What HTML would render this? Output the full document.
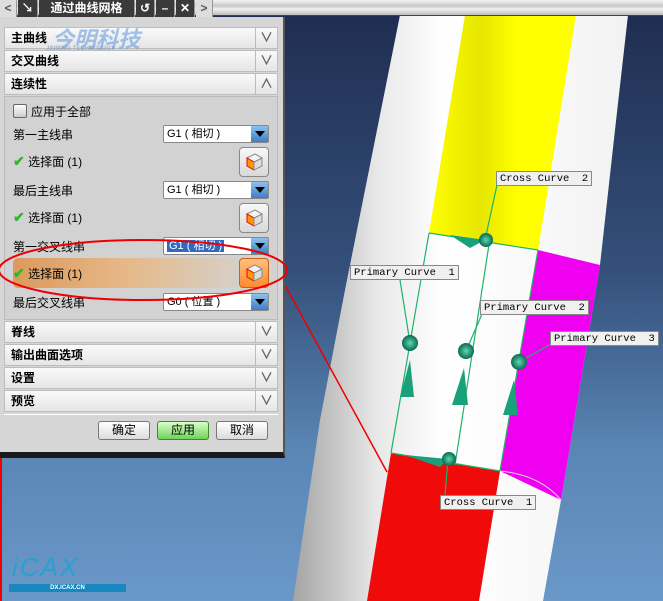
<!DOCTYPE html>
<html><head><meta charset="utf-8"><style>
*{margin:0;padding:0;box-sizing:border-box}
body{width:663px;height:601px;overflow:hidden;position:relative;font-family:"Liberation Sans","Noto Sans CJK SC","WenQuanYi Zen Hei",sans-serif;font-size:12px;color:#000;background:linear-gradient(#1f2b4f 0%,#34507a 45%,#5a86b5 75%,#6a98c8 100%)}
.abs{position:absolute}
.topbar{left:0;top:0;width:663px;height:16px;background:linear-gradient(#f4f4f4,#c8c8c8 40%,#f0f0f0 60%,#bcbcbc);border-bottom:1px solid #d00}
.tab{top:0;height:17px;background:#3a3a3a;color:#fff;font-weight:bold;text-align:center;line-height:17px;border-right:1px solid #999}
.dlg{left:0;top:17px;width:285px;height:441px;background:#d6d6d6;border-right:2px solid #555;border-bottom:6px solid #1a1a1a}
.hdr{left:4px;width:274px;height:22px;background:linear-gradient(#fafafa,#e6e6e6);border:1px solid #bdbdbd;font-weight:bold;line-height:21px;padding-left:6px;font-size:12px}
.hdr .b{position:absolute;right:0;top:0;width:22px;height:20px;border-left:1px solid #bbb;text-align:center;color:#666;font-size:13px;line-height:20px}
.lbl{left:13px}
.dd{left:163px;width:106px;height:18px;background:#fff;border:1px solid #888;border-radius:2px;font-size:11px;line-height:16px;padding-left:3px}
.dd .a{position:absolute;right:0;top:0;width:17px;height:16px;background:linear-gradient(#8ec0ee,#3c7fc8);}
.dd .a:after{content:"";position:absolute;left:4px;top:5px;border-left:5px solid transparent;border-right:5px solid transparent;border-top:6px solid #000}
.ib{left:239px;width:30px;height:30px;border:1px solid #888;border-radius:4px;background:linear-gradient(#f8f8f8,#d8d8d8)}
.chk{color:#2ab82a;font-weight:bold;font-size:14px}
.btn{top:421px;width:52px;height:19px;border:1px solid #777;border-radius:3px;background:linear-gradient(#fff,#dcdcdc);text-align:center;line-height:17px}
.lab{background:#f0f0f0;border:1px solid #888;font-family:"Liberation Mono",monospace;font-size:10.5px;padding:0 3px;height:15px;line-height:14px;white-space:pre}
</style></head><body>
<svg class="abs" style="left:0;top:0" width="663" height="601">
<defs>
<linearGradient id="pg" x1="0" x2="1" y1="0" y2="0"><stop offset="0" stop-color="#a4a4a4"/><stop offset=".25" stop-color="#e8e8e8"/><stop offset=".45" stop-color="#fff"/><stop offset="1" stop-color="#f2f2f2"/></linearGradient>
<linearGradient id="yg" x1="0" x2="1"><stop offset="0" stop-color="#ffff00"/><stop offset=".35" stop-color="#e6e600"/><stop offset=".6" stop-color="#ffff00"/></linearGradient>
<radialGradient id="sg"><stop offset="0" stop-color="#5fd8b0"/><stop offset="1" stop-color="#0a6a50"/></radialGradient>
</defs>
<path d="M400,15 L628,15 L615,130 L600,265 L561,500 L543,601 L293,601 L320,420 L345,290 L375,140 Z" fill="url(#pg)"/>
<polygon points="465,15 576,15 538,250 429,233" fill="url(#yg)"/>
<polygon points="538,250 600,265 561,500 500,471" fill="#f000f0"/>
<polygon points="391,453 500,471 479,601 367,601" fill="#f00a0a"/>
<path d="M500,471 Q540,475 561,500" fill="none" stroke="#ddd"/>
<g stroke="#1bb56a" stroke-width="1.2" fill="none">
<line x1="429" y1="233" x2="538" y2="250"/><line x1="429" y1="233" x2="391" y2="453"/>
<line x1="490" y1="238" x2="455" y2="465"/><line x1="538" y1="250" x2="500" y2="471"/>
<line x1="391" y1="453" x2="500" y2="471"/>
<line x1="497" y1="185" x2="485" y2="240"/><line x1="400" y1="280" x2="410" y2="343"/>
<line x1="482" y1="314" x2="466" y2="351"/><line x1="551" y1="344" x2="519" y2="362"/>
<line x1="445" y1="495" x2="448" y2="459"/>
</g>
<g fill="#1aa07a">
<polygon points="410,360 400,397 414,397"/><polygon points="464,368 452,405 468,405"/><polygon points="514,380 503,415 518,415"/>
<polygon points="450,235 485,240 470,248"/><polygon points="405,455 448,459 440,467"/>
</g>
<g fill="url(#sg)"><circle cx="410" cy="343" r="8"/><circle cx="466" cy="351" r="8"/><circle cx="519" cy="362" r="8"/><circle cx="486" cy="240" r="7"/><circle cx="449" cy="459" r="7"/></g>
<line x1="285" y1="285" x2="387" y2="472" stroke="#e00" stroke-width="1.5"/>
<line x1="1" y1="458" x2="1" y2="601" stroke="#e00" stroke-width="2"/>
</svg>
<div class="abs topbar"></div>
<div class="abs tab" style="left:0;width:17px;background:#ddd;color:#555">&lt;</div>
<div class="abs tab" style="left:18px;width:20px">↘</div>
<div class="abs tab" style="left:39px;width:96px;color:#fff">通过曲线网格</div>
<div class="abs tab" style="left:136px;width:19px">↺</div>
<div class="abs tab" style="left:156px;width:19px">–</div>
<div class="abs tab" style="left:176px;width:19px">✕</div>
<div class="abs tab" style="left:196px;width:17px;background:#ddd;color:#555">&gt;</div>
<div class="abs dlg"></div>
<div class="abs hdr" style="top:27px">主曲线<div class="b">∨</div></div>
<div class="abs hdr" style="top:50px">交叉曲线<div class="b">∨</div></div>
<div class="abs hdr" style="top:73px">连续性<div class="b">∧</div></div>
<div class="abs" style="left:52px;top:22px;color:rgba(90,150,220,.55);font-size:22px;font-weight:bold;font-style:italic">今明科技</div>
<div class="abs" style="left:46px;top:46px;color:rgba(120,150,190,.6);font-size:6px;font-weight:bold">JINMING TECHNOLOGY</div>
<div class="abs" style="left:4px;top:96px;width:274px;height:224px;background:#d2d2d2;border:1px solid #bbb"></div>
<div class="abs" style="left:13px;top:104px;width:14px;height:14px;border:1px solid #666;border-radius:2px;background:linear-gradient(#fff,#ccc)"></div>
<div class="abs" style="left:31px;top:103px">应用于全部</div>
<div class="abs lbl" style="top:126px">第一主线串</div>
<div class="abs dd" style="top:125px">G1 ( 相切 )<div class="a"></div></div>
<div class="abs lbl" style="top:153px"><span class="chk">✔</span> 选择面 (1)</div>
<div class="abs ib" style="top:147px"></div>
<div class="abs lbl" style="top:182px">最后主线串</div>
<div class="abs dd" style="top:181px">G1 ( 相切 )<div class="a"></div></div>
<div class="abs lbl" style="top:209px"><span class="chk">✔</span> 选择面 (1)</div>
<div class="abs ib" style="top:203px"></div>
<div class="abs lbl" style="top:238px">第一交叉线串</div>
<div class="abs dd" style="top:237px"><span style="background:#3168c0;color:#fff;padding:0 2px">G1 ( 相切 )</span><div class="a"></div></div>
<div class="abs" style="left:13px;top:258px;width:226px;height:30px;border-radius:5px;background:linear-gradient(90deg,#dc9a5c,#e6b888 50%,#d6d0c8)"></div>
<div class="abs lbl" style="top:265px"><span class="chk">✔</span> 选择面 (1)</div>
<div class="abs ib" style="top:258px;background:linear-gradient(#ffc080,#ff8a30);border-color:#d06010"></div>
<div class="abs lbl" style="top:294px">最后交叉线串</div>
<div class="abs dd" style="top:293px">G0 ( 位置 )<div class="a"></div></div>
<svg class="abs" style="left:244px;top:152px" width="20" height="20"><polygon points="3,6 11,2 18,6 10,10" fill="#f4f4f4" stroke="#888"/><polygon points="3,6 10,10 10,18 3,14" fill="#ff9a00" stroke="#e00"/><polygon points="10,10 18,6 18,14 10,18" fill="#ddd" stroke="#888"/></svg>
<svg class="abs" style="left:244px;top:208px" width="20" height="20"><polygon points="3,6 11,2 18,6 10,10" fill="#f4f4f4" stroke="#888"/><polygon points="3,6 10,10 10,18 3,14" fill="#ff9a00" stroke="#e00"/><polygon points="10,10 18,6 18,14 10,18" fill="#ddd" stroke="#888"/></svg>
<svg class="abs" style="left:244px;top:263px" width="20" height="20"><polygon points="3,6 11,2 18,6 10,10" fill="#f4f4f4" stroke="#888"/><polygon points="3,6 10,10 10,18 3,14" fill="#ff9a00" stroke="#e00"/><polygon points="10,10 18,6 18,14 10,18" fill="#ddd" stroke="#888"/></svg>
<div class="abs hdr" style="top:321px">脊线<div class="b">∨</div></div>
<div class="abs hdr" style="top:344px">输出曲面选项<div class="b">∨</div></div>
<div class="abs hdr" style="top:367px">设置<div class="b">∨</div></div>
<div class="abs hdr" style="top:390px">预览<div class="b">∨</div></div>
<div class="abs" style="left:4px;top:414px;width:274px;height:1px;background:#fff"></div>
<div class="abs btn" style="left:98px">确定</div>
<div class="abs btn" style="left:157px;background:linear-gradient(#d8ffc8,#6fd35a);border-color:#3a8a2a">应用</div>
<div class="abs btn" style="left:216px">取消</div>
<svg class="abs" style="left:0;top:0" width="300" height="310"><ellipse cx="143" cy="270" rx="144" ry="30" fill="none" stroke="#e00" stroke-width="2"/></svg>
<div class="abs lab" style="left:496px;top:171px">Cross Curve  2</div>
<div class="abs lab" style="left:350px;top:265px">Primary Curve  1</div>
<div class="abs lab" style="left:480px;top:300px">Primary Curve  2</div>
<div class="abs lab" style="left:550px;top:331px">Primary Curve  3</div>
<div class="abs lab" style="left:440px;top:495px">Cross Curve  1</div>
<div class="abs" style="left:12px;top:552px;color:#2aa0d0;font-size:26px;font-style:italic;letter-spacing:2px">iCAX</div>
<div class="abs" style="left:9px;top:584px;width:117px;height:8px;background:#1a88c0;color:#fff;font-size:6px;font-weight:bold;text-align:center;line-height:8px">DX.ICAX.CN</div>
</body></html>
